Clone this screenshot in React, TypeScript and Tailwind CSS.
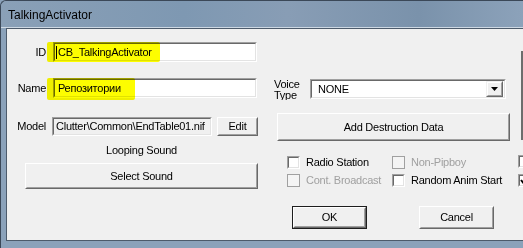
import type { ReactNode } from 'react';

function Sunken({ className, inner, children }: { className: string; inner: string; children?: ReactNode }) {
  return (
    <div className={`${className} border border-t-[#a0a0a0] border-l-[#a0a0a0] border-r-white border-b-white`}>
      <div className={`h-full border border-t-[#696969] border-l-[#696969] border-r-[#e3e3e3] border-b-[#e3e3e3] flex items-center overflow-hidden whitespace-nowrap ${inner}`}>
        {children}
      </div>
    </div>
  );
}

function Btn({ className, children, isDefault }: { className: string; children: ReactNode; isDefault?: boolean }) {
  const face = (
    <div className="h-full border border-t-white border-l-white border-r-[#696969] border-b-[#696969]">
      <div className="h-full border border-t-[#f0f0f0] border-l-[#f0f0f0] border-r-[#a0a0a0] border-b-[#a0a0a0] flex items-center justify-center bg-[#f0f0f0]">
        {children}
      </div>
    </div>
  );
  if (isDefault) return <div className={`${className} border border-[#1e1e1e]`}>{face}</div>;
  return <div className={className}>{face}</div>;
}

function Box({ disabled, checked }: { disabled?: boolean; checked?: boolean }) {
  if (disabled) {
    return <div className="w-[13px] h-[13px] shrink-0 border border-[#a0a0a0] bg-[#f4f4f4]" />;
  }
  return (
    <div className="w-[13px] h-[13px] shrink-0 border border-t-[#a0a0a0] border-l-[#a0a0a0] border-r-white border-b-white">
      <div className="w-full h-full border border-t-[#696969] border-l-[#696969] border-r-[#e3e3e3] border-b-[#e3e3e3] bg-white">
        {checked && (
          <svg width="9" height="9" viewBox="0 0 9 9" className="block">
            <polyline points="1,4 3,6.5 7.5,1.5" fill="none" stroke="#000" strokeWidth="2" />
          </svg>
        )}
      </div>
    </div>
  );
}

function Check({ label, disabled, className }: { label: string; disabled?: boolean; className: string }) {
  return (
    <div className={`flex items-center gap-[6px] ${className}`}>
      <Box disabled={disabled} />
      <span className={disabled ? 'text-[#a0a0a0]' : 'text-black'}>{label}</span>
    </div>
  );
}

export default function App() {
  return (
    <div className="w-[523px] h-[248px] overflow-hidden bg-[#8ba2ba]">
      <div className="w-[523px] h-[248px] flex flex-col bg-[#8ba2ba] border-l border-t border-[#3b4858] rounded-tl-[6px] font-['Liberation_Sans',Arial,sans-serif] text-[11px] tracking-[-0.25px] text-black">
        {/* Title bar */}
        <div className="h-[27px] shrink-0 flex items-center pl-[7px] pt-[2px] text-[12px] tracking-normal border-b border-[#cdd8e3] bg-[linear-gradient(90deg,#8aa0b7_0%,#7e98b2_35%,#889db5_55%,#7a92ab_80%,#8ca2ba_100%)] rounded-tl-[6px]">
          TalkingActivator
        </div>

        {/* Client area */}
        <div className="flex-1 ml-[5px] mb-[7px] border-l border-t border-b border-[#4d5b6b] bg-[#f0f0f0] flex overflow-hidden">
          {/* Left column */}
          <div className="w-[267px] shrink-0 flex flex-col">
            <div className="mt-[13px] h-[20px] flex items-center">
              <span className="w-[39px] text-right">ID</span>
              <div className="relative ml-[7px]">
                <Sunken className="w-[204px] h-[20px]" inner="bg-white pl-[1px]">
                  <span className="w-px h-[13px] bg-black mr-[1px]" />
                  CB_TalkingActivator
                </Sunken>
                <span className="absolute -left-[6px] top-0 w-[113px] h-[20px] bg-[#fdfd00] mix-blend-multiply rounded-[2px]" />
              </div>
            </div>

            <div className="mt-[16px] h-[20px] flex items-center">
              <span className="w-[39px] text-right">Name</span>
              <div className="relative ml-[7px]">
                <Sunken className="w-[204px] h-[20px]" inner="bg-white pl-[3px]">
                  Репозитории
                </Sunken>
                <span className="absolute -left-[6px] top-0 w-[88px] h-[22px] bg-[#fdfd00] mix-blend-multiply rounded-[2px]" />
              </div>
            </div>

            <div className="mt-[19px] h-[19px] flex items-center">
              <span className="w-[39px] text-right">Model</span>
              <Sunken className="ml-[6px] w-[160px] h-[19px]" inner="bg-[#f0f0f0] pl-[2px]">
                Clutter\Common\EndTable01.nif
              </Sunken>
              <Btn className="ml-[5px] w-[41px] h-[19px]">Edit</Btn>
            </div>

            <div className="ml-[18px] w-[233px] flex flex-col">
              <div className="mt-[8px] h-[13px] leading-[13px] text-center">Looping Sound</div>
              <Btn className="mt-[6px] w-[233px] h-[26px]">Select Sound</Btn>
            </div>
          </div>

          {/* Right column */}
          <div className="w-[243px] shrink-0 flex flex-col">
            <div className="mt-[49px] h-[23px] flex items-start">
              <div className="w-[36px] h-[21px] mt-[1px] leading-[11px] overflow-hidden">Voice Type</div>
              <Sunken className="mt-[1px] w-[196px] h-[20px]" inner="bg-white pl-[6px] justify-between">
                NONE
                <div className="w-[17px] h-[16px] mr-[1px] border border-t-[#f0f0f0] border-l-[#f0f0f0] border-r-[#696969] border-b-[#696969]">
                  <div className="h-full border border-t-white border-l-white border-r-[#a0a0a0] border-b-[#a0a0a0] bg-[#f0f0f0] flex items-center justify-center">
                    <svg width="7" height="4" viewBox="0 0 7 4" className="block">
                      <polygon points="0,0 7,0 3.5,4" fill="#000" />
                    </svg>
                  </div>
                </div>
              </Sunken>
            </div>

            <Btn className="mt-[12px] ml-[3px] w-[233px] h-[28px]">Add Destruction Data</Btn>

            <div className="mt-[15px] ml-[13px] h-[13px] flex">
              <Check className="w-[105px]" label="Radio Station" />
              <Check className="w-[110px]" label="Non-Pipboy" disabled />
            </div>
            <div className="mt-[5px] ml-[13px] h-[13px] flex">
              <Check className="w-[105px]" label="Cont. Broadcast" disabled />
              <Check className="w-[120px]" label="Random Anim Start" />
            </div>

            <div className="mt-[19px] ml-[18px] flex gap-[52px]">
              <Btn className="w-[75px] h-[23px]" isDefault>OK</Btn>
              <Btn className="w-[75px] h-[23px]">Cancel</Btn>
            </div>
          </div>

          {/* Right edge, cut off */}
          <div className="flex-1 flex flex-col">
            <div className="mt-[22px] ml-[4px] h-[89px] border-l-2 border-[#6d6d6d] bg-[#e8e8e8]" />
            <div className="mt-[15px] ml-[1px]">
              <Box />
            </div>
            <div className="mt-[6px] ml-[1px]">
              <Box checked />
            </div>
          </div>
        </div>
      </div>
    </div>
  );
}
